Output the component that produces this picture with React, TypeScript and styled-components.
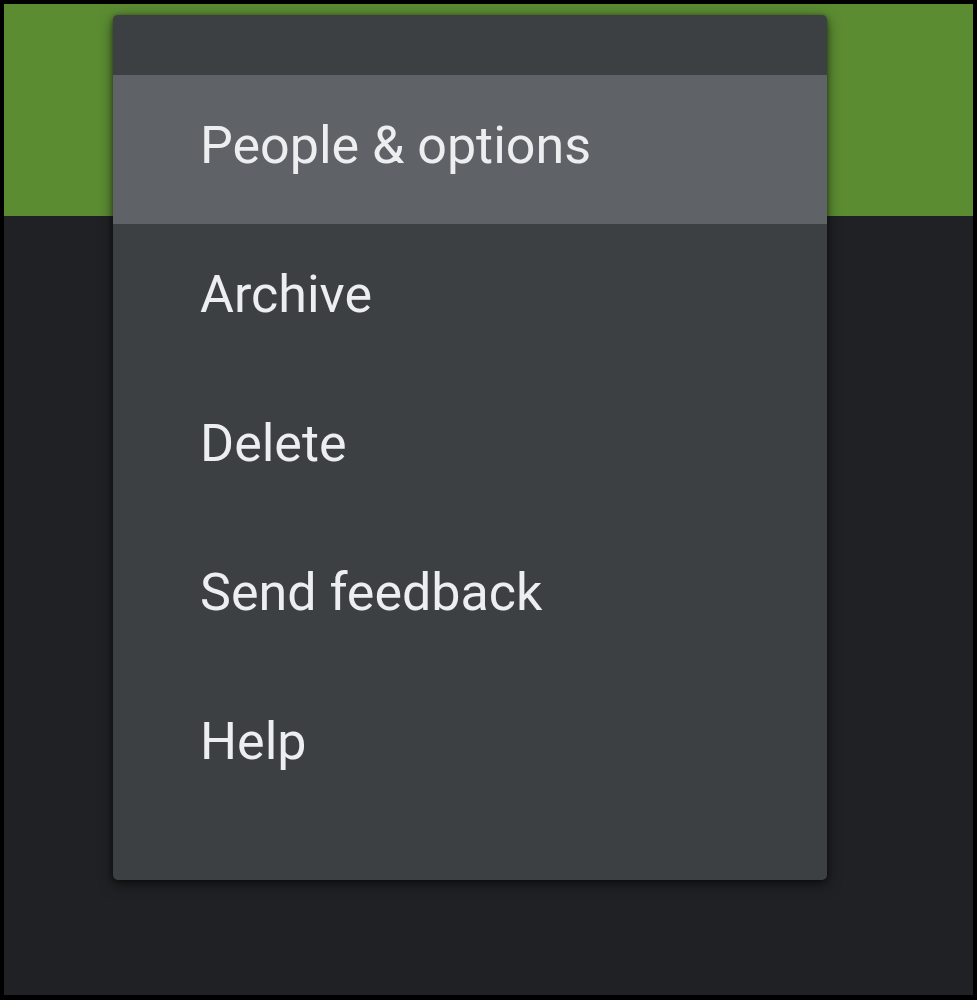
import styled, { createGlobalStyle } from 'styled-components';

const GlobalStyle = createGlobalStyle`
  html, body {
    margin: 0;
    padding: 0;
    background: #000;
  }
  body {
    font-family: Roboto, "Noto Sans", sans-serif;
  }
`;

const Frame = styled.div`
  width: 977px;
  height: 1000px;
  box-sizing: border-box;
  padding: 4px 4px 5px 4px;
  background: #000;
`;

const Screen = styled.div`
  position: relative;
  height: 100%;
  display: flex;
  flex-direction: column;
  background: #202124;
  overflow: hidden;
`;

const Header = styled.div`
  height: 212px;
  flex-shrink: 0;
  background: #5b8c32;
`;

const Menu = styled.ul`
  position: absolute;
  left: 109px;
  top: 11px;
  width: 714px;
  margin: 0;
  padding: 60px 0;
  list-style: none;
  background: #3c4043;
  border-radius: 5px;
  box-shadow: 0 4px 14px rgba(0, 0, 0, 0.55), 0 1px 4px rgba(0, 0, 0, 0.4);
`;

const Item = styled.li<{ $active?: boolean }>`
  height: 149px;
  box-sizing: border-box;
  padding: 0 0 8px 87px;
  display: flex;
  align-items: center;
  background: ${(p) => (p.$active ? '#5f6368' : 'transparent')};
  color: #eceef0;
  font-size: 52px;
  font-weight: 400;
  letter-spacing: 0;
  white-space: nowrap;
`;

const items = ['People & options', 'Archive', 'Delete', 'Send feedback', 'Help'];

export default function App() {
  return (
    <>
      <GlobalStyle />
      <Frame>
        <Screen>
          <Header />
          <Menu>
            {items.map((label, i) => (
              <Item key={label} $active={i === 0}>
                {label}
              </Item>
            ))}
          </Menu>
        </Screen>
      </Frame>
    </>
  );
}
